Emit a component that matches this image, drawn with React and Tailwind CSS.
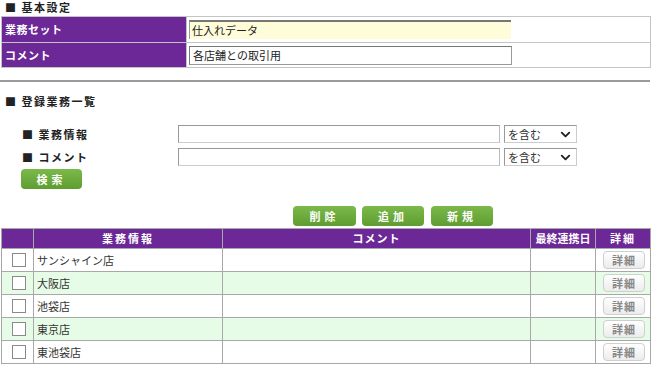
import React from 'react';
import { ChevronDown } from 'lucide-react';

const font = { fontFamily: '"Noto Sans CJK JP", "Noto Sans", sans-serif' };

const rows = ['サンシャイン店', '大阪店', '池袋店', '東京店', '東池袋店'];

const GreenButton = ({ label, className }) => (
	<button
		type="button"
		className={`h-[20px] rounded-[4px] bg-gradient-to-b from-[#7cb94a] to-[#5f9d31] text-white text-[11px] font-bold tracking-[4px] leading-none flex items-center justify-center ${className}`}>
		{label}
	</button>
);

const SelectBox = () => (
	<div className="w-[73px] h-[18px] ml-[4px] border border-[#999] border-b-[#ccc] border-r-[#ccc] bg-white flex items-center justify-between pl-[3px] pr-[3px]">
		<span className="text-[11px] text-[#333]">を含む</span>
		<ChevronDown size={15} strokeWidth={3} className="text-[#222]" />
	</div>
);

const App = () => {
	return (
		<div className="w-[656px] h-[375px] bg-white overflow-hidden text-[#222]" style={font}>
			<div className="h-[16px] pl-[5px] text-[11px] font-bold leading-[15px] tracking-[1.5px]">■ 基本設定</div>

			<table className="ml-[1px] w-[650px] border-collapse border border-[#c4c4c4] text-[11px] table-fixed">
				<tbody>
					<tr className="h-[26px]">
						<td className="w-[185px] bg-[#6b2896] text-white font-bold pl-[3px] border border-[#c4c4c4] tracking-[0.5px]">
							業務セット
						</td>
						<td className="border border-[#c4c4c4] pl-[2px]">
							<div className="w-[322px] h-[19px] bg-[#fefcd9] border-t-2 border-l border-t-[#777] border-l-[#999] flex items-center pl-[2px] text-[11px]">
								仕入れデータ
							</div>
						</td>
					</tr>
					<tr className="h-[25px]">
						<td className="bg-[#6b2896] text-white font-bold pl-[3px] border border-[#c4c4c4] tracking-[0.5px]">
							コメント
						</td>
						<td className="border border-[#c4c4c4] pl-[2px]">
							<div className="w-[323px] h-[19px] bg-white border border-[#999] border-t-[#777] border-l-[#777] flex items-center pl-[3px] text-[11px]">
								各店舗との取引用
							</div>
						</td>
					</tr>
				</tbody>
			</table>

			<div className="mt-[12px] w-[650px] h-[2px] bg-[#9a9a9a]"></div>

			<div className="mt-[12px] h-[14px] pl-[5px] text-[11px] font-bold leading-[14px] tracking-[1.5px]">■ 登録業務一覧</div>

			<div className="mt-[17px] flex items-center h-[18px]">
				<span className="w-[178px] pl-[22px] text-[11px] font-bold tracking-[1.5px]">■ 業務情報</span>
				<div className="w-[322px] h-[18px] border border-[#999] border-b-[#ccc] border-r-[#bbb] bg-white"></div>
				<SelectBox />
			</div>
			<div className="mt-[5px] flex items-center h-[18px]">
				<span className="w-[178px] pl-[22px] text-[11px] font-bold tracking-[1.5px]">■ コメント</span>
				<div className="w-[322px] h-[18px] border border-[#999] border-b-[#ccc] border-r-[#bbb] bg-white"></div>
				<SelectBox />
			</div>
			<div className="mt-[3px] pl-[21px] flex">
				<GreenButton label="検索" className="w-[61px] h-[19px]" />
			</div>

			<div className="mt-[17px] pl-[293px] flex gap-[6px]">
				<GreenButton label="削除" className="w-[63px]" />
				<GreenButton label="追加" className="w-[62px]" />
				<GreenButton label="新規" className="w-[62px] ml-[1px]" />
			</div>

			<table className="mt-[2px] ml-[1px] w-[650px] border-collapse table-fixed text-[11px]">
				<thead>
					<tr className="h-[20px] bg-[#6b2896] text-white font-bold tracking-[1px]">
						<th className="w-[32px] border border-[#a8a8a8]"></th>
						<th className="w-[189px] border border-[#a8a8a8] tracking-[2px]">業務情報</th>
						<th className="w-[308px] border border-[#a8a8a8]">コメント</th>
						<th className="w-[65px] border border-[#a8a8a8] tracking-[0px]">最終連携日</th>
						<th className="border border-[#a8a8a8] tracking-[2px]">詳細</th>
					</tr>
				</thead>
				<tbody>
					{rows.map((name, i) => (
						<tr key={name} className={`h-[23px] ${i % 2 === 1 ? 'bg-[#e6fce6]' : 'bg-white'}`}>
							<td className="border border-[#a8a8a8] p-0">
								<div className="ml-[10px] w-[14px] h-[14px] border border-[#8a8a8a] bg-white"></div>
							</td>
							<td className="border border-[#a8a8a8] pl-[3px] text-[#333] leading-[14px]">{name}</td>
							<td className="border border-[#a8a8a8]"></td>
							<td className="border border-[#a8a8a8]"></td>
							<td className="border border-[#a8a8a8] p-0">
								<div className="ml-[7px] w-[42px] h-[18px] rounded-[4px] border border-[#cfcfcf] bg-gradient-to-b from-white to-[#ececec] text-[#888] font-bold text-[11px] flex items-center justify-center tracking-[1px]">
									詳細
								</div>
							</td>
						</tr>
					))}
				</tbody>
			</table>
		</div>
	);
};

export default App;
